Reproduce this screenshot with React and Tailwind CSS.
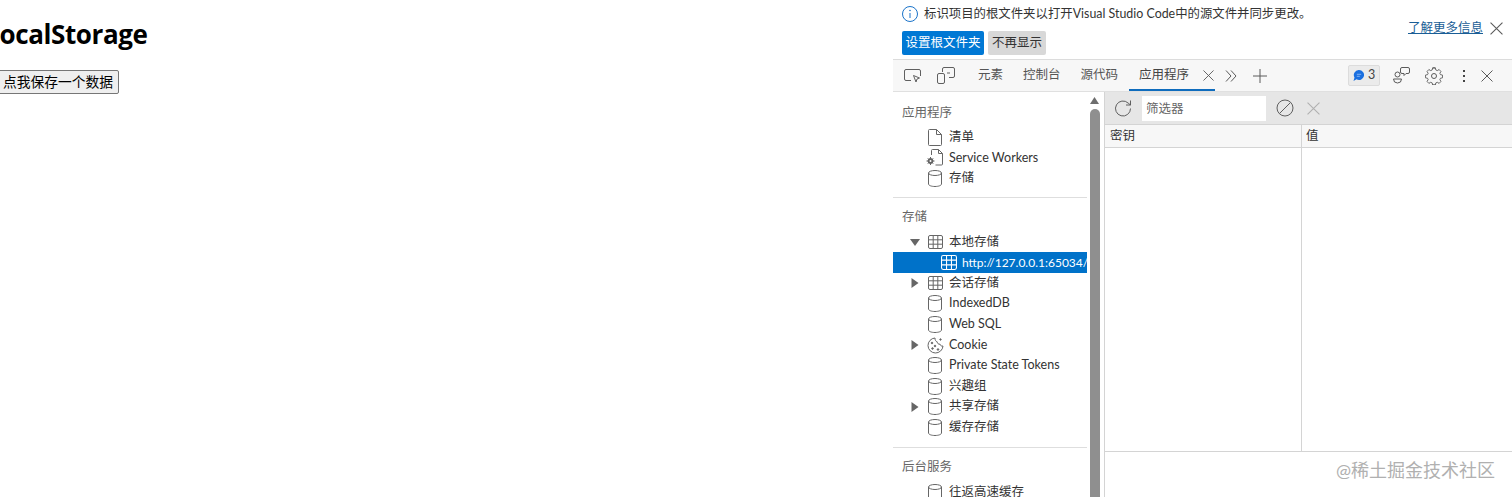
import React from 'react';

const FileIcon = () => (
  <svg width="14" height="17" viewBox="0 0 14 17" fill="none" stroke="#666666" strokeWidth="1">
    <path d="M.5 1.500a1 1 0 0 1 1-1h7l5 5v10a1 1 0 0 1-1 1h-11a1 1 0 0 1-1-1z" />
    <path d="M8.500 .5v5h5" />
  </svg>
);

const WorkerIcon = () => (
  <svg className="shrink-0" width="18" height="17" viewBox="0 0 18 17" fill="none" stroke="#666666" strokeWidth="1">
    <path d="M5.500 6V1.500a1 1 0 0 1 1-1h6l4 4v10.500a1 1 0 0 1-1 1h-6" />
    <path d="M12.500 .5v4h4" />
    <circle cx="4.500" cy="12" r="2.500" fill="#555555" />
    <path d="M4.500 8v8M.5 12h8M1.800 9.300l5.400 5.400M7.200 9.300l-5.400 5.400" />
    <circle cx="4.500" cy="12" r="1" fill="#fff" stroke="none" />
  </svg>
);

const DbIcon = () => (
  <svg width="14" height="17" viewBox="0 0 14 17" fill="none" stroke="#666666" strokeWidth="1">
    <ellipse cx="7" cy="3" rx="6.500" ry="2.500" />
    <path d="M.5 3v11c0 1.400 2.900 2.500 6.500 2.500s6.500-1.100 6.500-2.500V3" />
  </svg>
);

const GridIcon = ({ color = '#666666', size = 15 }) => (
  <svg className="shrink-0" width={size} height={size - 1} viewBox="0 0 15 14" fill="none" stroke={color} strokeWidth="1">
    <rect x=".5" y=".5" width="14" height="13" rx="1.500" />
    <path d="M5.200 .5v13M9.800 .5v13M.5 4.800h14M.5 9.200h14" />
  </svg>
);

const CookieIcon = () => (
  <svg width="17" height="17" viewBox="0 0 17 17" fill="none" stroke="#666666" strokeWidth="1">
    <path d="M8 1a7.500 7.500 0 1 0 8 8c-1.500.4-2.700-.4-3-1.800-1.600.2-2.800-.8-2.800-2.400C8.800 4.600 7.900 2.800 8 1z" />
    <circle cx="5" cy="6" r=".8" fill="#666666" />
    <circle cx="8" cy="9" r=".8" fill="#666666" />
    <circle cx="5.500" cy="11.500" r=".8" fill="#666666" />
    <circle cx="11" cy="12.500" r=".8" fill="#666666" />
    <circle cx="13.500" cy="2.500" r=".7" fill="#666666" />
  </svg>
);

const CloseIcon = ({ size = 12, color = '#5a5a5a' }) => (
  <svg width={size} height={size} viewBox="0 0 12 12" fill="none" stroke={color} strokeWidth="1">
    <path d="M.5 .5l11 11M11.500 .5l-11 11" />
  </svg>
);

const Caret = ({ open }) => (
  <svg width="10" height="10" viewBox="0 0 10 10" fill="#666666">
    {open ? <path d="M0 2h10L5 9z" /> : <path d="M1.500 0l7 5-7 5z" />}
  </svg>
);

const Row = ({ icon, label, caret }) => (
  <div className="flex items-center h-[20.6px] text-[12.5px] text-[#333333]">
    <div className="w-[16px] ml-[14px] flex justify-center">{caret && <Caret open={caret === 'open'} />}</div>
    <div className="w-[18px] ml-[3px] flex justify-center">{icon}</div>
    <span className="ml-[5px] whitespace-nowrap">{label}</span>
  </div>
);

const SectionLabel = ({ children }) => (
  <div className="h-[20px] pl-[9px] flex items-center text-[12.5px] text-[#666666]">{children}</div>
);

const Tab = ({ children }) => (
  <div className="h-full flex items-center text-[12.5px] text-[#555555]">{children}</div>
);

export default function App() {
  return (
    <div className="w-[1512px] h-[497px] overflow-hidden flex bg-white font-['Lato','Noto_Sans_CJK_SC',sans-serif]">
      {/* page on the left */}
      <div className="w-[893px] shrink-0 overflow-hidden">
        <h1 className="mt-[17px] ml-[-8px] text-[26px] leading-[34px] font-bold text-black font-['Open_Sans','Noto_Sans_CJK_SC',sans-serif] tracking-[-0.4px]">localStorage</h1>
        <button className="mt-[19px] ml-[-3px] h-[24px] w-[122px] text-[13.75px] leading-none text-black bg-[#efefef] border border-[#767676] rounded-[2px] font-['Noto_Sans_CJK_SC',sans-serif]">点我保存一个数据</button>
      </div>

      {/* devtools */}
      <div className="flex-1 min-w-0 flex flex-col">
        <div className="h-[59px] shrink-0 pl-[9px] pr-[9px] flex flex-col">
          <div className="flex items-center h-[28px]">
            <svg width="16" height="16" viewBox="0 0 16 16" fill="none" stroke="#1a73c9" strokeWidth="1">
              <circle cx="8" cy="8" r="7.500" />
              <path d="M8 7v5" />
              <circle cx="8" cy="4.500" r=".8" fill="#1a73c9" stroke="none" />
            </svg>
            <span className="ml-[6px] text-[12.4px] text-[#333333] whitespace-nowrap">标识项目的根文件夹以打开Visual Studio Code中的源文件并同步更改。</span>
          </div>
          <div className="flex items-start justify-between">
            <div className="flex gap-[4px] mt-[3px]">
              <button className="h-[24px] w-[82px] bg-[#0078d4] text-white text-[12.5px] rounded-[2px]">设置根文件夹</button>
              <button className="h-[24px] w-[58px] bg-[#d8d8d8] text-[#333333] text-[12.5px] rounded-[2px]">不再显示</button>
            </div>
            <div className="flex items-center mt-[-9px]">
              <a className="text-[12.5px] leading-[18px] text-[#1a5e96] underline">了解更多信息</a>
              <span className="ml-[7px]"><CloseIcon size={13} /></span>
            </div>
          </div>
        </div>

        <div className="h-[33px] shrink-0 bg-[#f7f7f7] border-t border-[#dcdcdc] border-b-[1px] border-b-[#e0e0e0] flex items-center pl-[11px] pr-[19px]">
          <svg width="18" height="16" viewBox="0 0 18 16" fill="none" stroke="#5f5f5f" strokeWidth="1">
            <path d="M7 12.500H2a1.500 1.500 0 0 1-1.500-1.500V3A1.500 1.500 0 0 1 2 1.500h13A1.500 1.500 0 0 1 16.500 3v5" />
            <path d="M9.500 7.500l6 2.500-2.500 1-1 3z" />
          </svg>
          <svg className="ml-[15px]" width="18" height="17" viewBox="0 0 18 17" fill="none" stroke="#5f5f5f" strokeWidth="1">
            <path d="M5.500 5V2a1.500 1.500 0 0 1 1.500-1.500h9A1.500 1.500 0 0 1 17.500 2v7a1.500 1.500 0 0 1-1.500 1.500h-4" />
            <rect x=".5" y="6.500" width="7" height="10" rx="1.500" />
            <path d="M10 6h3" />
          </svg>
          <div className="ml-[23px] h-full flex gap-[20px]">
            <Tab>元素</Tab>
            <Tab>控制台</Tab>
            <Tab>源代码</Tab>
            <div className="h-full flex items-center relative w-[76px] pl-[1px]">
              <span className="text-[12.5px] text-[#444444]">应用程序</span>
              <span className="ml-[14px]"><CloseIcon size={11} /></span>
              <div className="absolute left-[-9px] right-[-1px] bottom-0 h-[2px] bg-[#0f6cbd]" />
            </div>
          </div>
          <svg className="ml-[11px]" width="12" height="12" viewBox="0 0 12 12" fill="none" stroke="#5a5a5a" strokeWidth="1">
            <path d="M1 .5l5 5.500-5 5.500M6 .5l5 5.500-5 5.500" />
          </svg>
          <svg className="ml-[16px]" width="14" height="14" viewBox="0 0 14 14" fill="none" stroke="#5a5a5a" strokeWidth="1">
            <path d="M7 0v14M0 7h14" />
          </svg>
          <div className="ml-auto h-[21px] w-[32px] bg-[#ebebeb] border border-[#dcdcdc] rounded-[2px] flex items-center justify-center gap-[4px]">
            <svg width="11" height="11" viewBox="0 0 11 11">
              <path d="M6 0a5 5 0 1 1-2.500 9.300L.5 11l1-3.500A5 5 0 0 1 6 0z" fill="#1a6fe0" />
              <path d="M3.800 4.300h4.400M3.800 6.300h3" stroke="#9cc3f5" strokeWidth=".8" />
            </svg>
            <span className="text-[12.5px] text-[#444444] leading-none">3</span>
          </div>
          <svg className="ml-[13px]" width="17" height="17" viewBox="0 0 17 17" fill="none" stroke="#5a5a5a" strokeWidth="1">
            <circle cx="4.500" cy="7.500" r="2.500" />
            <path d="M.5 12h8a4 4 0 0 1-8 0z" />
            <path d="M9 .5h6a1.500 1.500 0 0 1 1.500 1.500v3A1.500 1.500 0 0 1 15 6.500h-2l-2 2v-2H9A1.500 1.500 0 0 1 7.500 5V2A1.500 1.500 0 0 1 9 .5z" />
          </svg>
          <svg className="ml-[15px]" width="18" height="18" viewBox="0 0 18 18" fill="none" stroke="#5a5a5a" strokeWidth="1">
            <circle cx="9" cy="9" r="2.500" />
            <path d="M7.500 1h3l.5 2.300 1.700.7 2-1.200 2 2.200-1.200 2 .7 1.500 2.300.5v3l-2.300.5-.7 1.500 1.200 2-2 2.200-2-1.200-1.700.7-.5 2.300h-3" transform="scale(.9) translate(1 0)" />
            <path d="M10.500 1h-3l-.5 2.300-1.700.7-2-1.200-2 2.200 1.200 2-.7 1.500-2.300.5v3l2.300.5.7 1.500-1.200 2 2 2.200 2-1.200 1.700.7.500 2.300h3" transform="scale(.9) translate(1 0)" />
          </svg>
          <div className="ml-[20px] flex flex-col gap-[3px]">
            <div className="w-[2px] h-[2px] bg-[#444444]" />
            <div className="w-[2px] h-[2px] bg-[#444444]" />
            <div className="w-[2px] h-[2px] bg-[#444444]" />
          </div>
          <span className="ml-[16px]"><CloseIcon size={12} /></span>
        </div>

        <div className="flex-1 min-h-0 flex">
          {/* sidebar */}
          <div className="w-[194px] shrink-0 overflow-hidden">
            <div className="mt-[11px]"><SectionLabel>应用程序</SectionLabel></div>
            <div className="mt-[4px]">
              <Row icon={<FileIcon />} label="清单" />
              <Row icon={<WorkerIcon />} label="Service Workers" />
              <Row icon={<DbIcon />} label="存储" />
            </div>
            <div className="mt-[8px] mb-[10px] h-px bg-[#dedede]" />
            <SectionLabel>存储</SectionLabel>
            <div className="mt-[4px]">
              <Row caret="open" icon={<GridIcon />} label="本地存储" />
              <div className="h-[20.6px] bg-[#0072c9] flex items-center pl-[48px] text-[12px] text-white whitespace-nowrap overflow-hidden">
                <GridIcon color="#ffffff" size={16} />
                <span className="ml-[5px]">http://127.0.0.1:65034/</span>
              </div>
              <Row caret="closed" icon={<GridIcon />} label="会话存储" />
              <Row icon={<DbIcon />} label="IndexedDB" />
              <Row icon={<DbIcon />} label="Web SQL" />
              <Row caret="closed" icon={<CookieIcon />} label="Cookie" />
              <Row icon={<DbIcon />} label="Private State Tokens" />
              <Row icon={<DbIcon />} label="兴趣组" />
              <Row caret="closed" icon={<DbIcon />} label="共享存储" />
              <Row icon={<DbIcon />} label="缓存存储" />
            </div>
            <div className="mt-[9px] mb-[10px] h-px bg-[#dedede]" />
            <SectionLabel>后台服务</SectionLabel>
            <div className="mt-[4px]">
              <Row icon={<DbIcon />} label="往返高速缓存" />
            </div>
          </div>

          {/* scrollbar */}
          <div className="w-[18px] shrink-0 flex flex-col items-center border-r border-[#d4d4d4] pr-[2px]">
            <svg className="mt-[5px]" width="9" height="7" viewBox="0 0 9 7" fill="#6e6e6e"><path d="M4.500 0L9 7H0z" /></svg>
            <div className="mt-[5px] flex-1 w-[10px] rounded-t-[5px] bg-[#8f8f8f]" />
          </div>

          {/* storage table */}
          <div className="flex-1 min-w-0 flex flex-col">
            <div className="h-[33px] shrink-0 bg-[#e6e6e6] border-b border-[#d4d4d4] flex items-center pl-[9px]">
              <svg width="19" height="19" viewBox="0 0 19 19" fill="none" stroke="#5f5f5f" strokeWidth="1">
                <path d="M16.500 9.500a7.500 7.500 0 1 1-2.300-5.400L16.500 6" />
                <path d="M16.500 1.500V6H12" />
              </svg>
              <div className="ml-[9px] w-[124px] h-[25px] bg-white text-[12.5px] text-[#666666] flex items-center pl-[4px] pt-[2px]">筛选器</div>
              <svg className="ml-[10px]" width="18" height="18" viewBox="0 0 18 18" fill="none" stroke="#5f5f5f" strokeWidth="1">
                <circle cx="9" cy="9" r="8" />
                <path d="M3.500 14.500l11-11" />
              </svg>
              <span className="ml-[13px]"><CloseIcon size={13} color="#b0b0b0" /></span>
            </div>
            <div className="h-[23px] shrink-0 flex bg-[#f7f7f7] border-b border-[#d4d4d4] text-[12.5px] text-[#333333]">
              <div className="w-[197px] shrink-0 border-r border-[#d4d4d4] pl-[5px] pt-[1px] flex items-center">密钥</div>
              <div className="flex-1 pl-[4px] pt-[1px] flex items-center">值</div>
            </div>
            <div className="h-[304px] shrink-0 flex border-b border-[#d4d4d4]">
              <div className="w-[197px] shrink-0 border-r border-[#d4d4d4]" />
            </div>
            <div className="flex-1 relative">
              <span className="absolute right-[17px] top-[7px] text-[18px] leading-[22px] text-[#b0b0b0] whitespace-nowrap">@稀土掘金技术社区</span>
            </div>
          </div>
        </div>
      </div>
    </div>
  );
}
